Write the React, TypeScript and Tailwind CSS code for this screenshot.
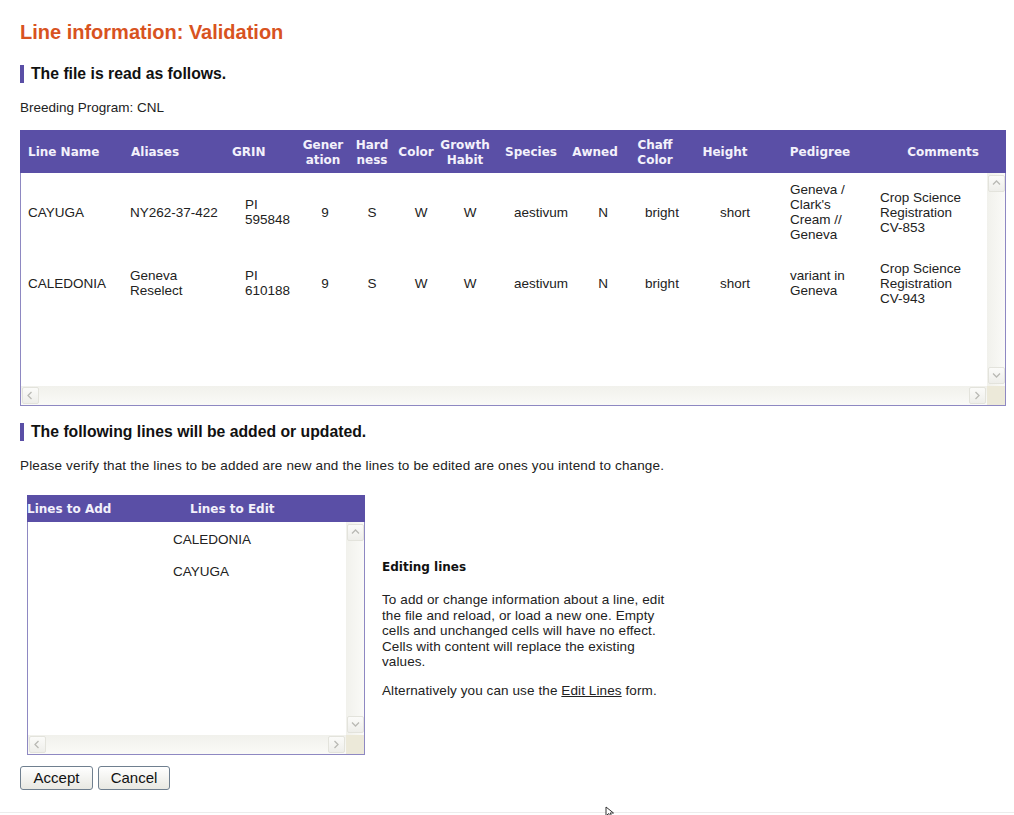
import React from "react";

const PURPLE = "bg-[#5a4fa6]";

function Chevron({ dir }: { dir: "up" | "down" | "left" | "right" }) {
  const pts: Record<string, string> = {
    up: "1,5.5 4.5,2 8,5.5",
    down: "1,2.5 4.5,6 8,2.5",
    left: "5.5,1 2,4.5 5.5,8",
    right: "2.5,1 6,4.5 2.5,8",
  };
  return (
    <svg width="9" height="9" viewBox="0 0 9 9">
      <polyline points={pts[dir]} fill="none" stroke="#b9b9b4" strokeWidth="1.3" />
    </svg>
  );
}

function SBtn({ dir }: { dir: "up" | "down" | "left" | "right" }) {
  return (
    <div className="w-[17px] h-[17px] shrink-0 flex items-center justify-center rounded-[2px] border border-[#e3e3dc] bg-linear-to-b from-[#fbfbf9] to-[#eeeeea]">
      <Chevron dir={dir} />
    </div>
  );
}

function VScroll() {
  return (
    <div className="w-[18px] shrink-0 flex flex-col items-center pt-[2px] pb-[2px] bg-linear-to-r from-[#f1f1ec] to-[#fafaf7]">
      <SBtn dir="up" />
      <div className="flex-1" />
      <SBtn dir="down" />
    </div>
  );
}

function HScroll() {
  return (
    <div className="h-[19px] shrink-0 flex">
      <div className="flex-1 flex items-center pl-[1px] pr-[1px] bg-linear-to-b from-[#f1f1ec] to-[#fafaf7]">
        <SBtn dir="left" />
        <div className="flex-1" />
        <SBtn dir="right" />
      </div>
      <div className="w-[18px] bg-[#ece9d9]" />
    </div>
  );
}

function Heading({ children, className }: { children: React.ReactNode; className?: string }) {
  return (
    <div className={"flex items-center h-[18px] " + (className || "")}>
      <div className={"w-[4px] h-[18px] " + PURPLE} />
      <div className="ml-[7px] font-bold text-[15.75px] leading-[18px] text-[#111]">{children}</div>
    </div>
  );
}

type Row = {
  name: string;
  aliases: React.ReactNode;
  grin: React.ReactNode;
  gen: string;
  hard: string;
  color: string;
  growth: string;
  species: string;
  awned: string;
  chaff: string;
  height: string;
  pedigree: React.ReactNode;
  comments: React.ReactNode;
  h: string;
};

const rows: Row[] = [
  {
    name: "CAYUGA",
    aliases: "NY262-37-422",
    grin: (
      <>
        PI
        <br />
        595848
      </>
    ),
    gen: "9",
    hard: "S",
    color: "W",
    growth: "W",
    species: "aestivum",
    awned: "N",
    chaff: "bright",
    height: "short",
    pedigree: (
      <>
        Geneva /<br />
        Clark&#39;s
        <br />
        Cream //
        <br />
        Geneva
      </>
    ),
    comments: (
      <>
        Crop Science
        <br />
        Registration
        <br />
        CV-853
      </>
    ),
    h: "h-[78px]",
  },
  {
    name: "CALEDONIA",
    aliases: (
      <>
        Geneva
        <br />
        Reselect
      </>
    ),
    grin: (
      <>
        PI
        <br />
        610188
      </>
    ),
    gen: "9",
    hard: "S",
    color: "W",
    growth: "W",
    species: "aestivum",
    awned: "N",
    chaff: "bright",
    height: "short",
    pedigree: (
      <>
        variant in
        <br />
        Geneva
      </>
    ),
    comments: (
      <>
        Crop Science
        <br />
        Registration
        <br />
        CV-943
      </>
    ),
    h: "h-[64px]",
  },
];

export default function App() {
  return (
    <div className="relative w-[1014px] h-[815px] overflow-hidden bg-white font-['Liberation_Sans',Arial,sans-serif] text-[13.5px] leading-[15px] text-[#222]">
      <div className="pl-[20px] pt-[20px]">
        <h1 className="font-bold text-[20px] leading-[24px] text-[#d8531f]">Line information: Validation</h1>

        <Heading className="mt-[21px]">The file is read as follows.</Heading>

        <div className="mt-[17px]">Breeding Program: CNL</div>

        {/* main table */}
        <div className="mt-[15px] w-[986px]">
          <div className={"flex items-center pt-[2px] h-[43px] text-[#f3f1fb] font-['DejaVu_Sans',Verdana,sans-serif] font-bold text-[12px] leading-[15px] " + PURPLE}>
            <div className="w-[103px] pl-[8px]">Line Name</div>
            <div className="w-[101px] pl-[8px]">Aliases</div>
            <div className="w-[72px] pl-[8px]">GRIN</div>
            <div className="w-[54px] text-center">
              Gener
              <br />
              ation
            </div>
            <div className="w-[44px] text-center">
              Hard
              <br />
              ness
            </div>
            <div className="w-[44px] text-center">Color</div>
            <div className="w-[54px] text-center">
              Growth
              <br />
              Habit
            </div>
            <div className="w-[78px] text-center">Species</div>
            <div className="w-[50px] text-center">Awned</div>
            <div className="w-[70px] text-center">
              Chaff
              <br />
              Color
            </div>
            <div className="w-[70px] text-center">Height</div>
            <div className="w-[120px] text-center">Pedigree</div>
            <div className="w-[126px] text-center">Comments</div>
          </div>
          <div className="h-[233px] flex flex-col border border-t-0 border-[#8e88c2]">
            <div className="flex-1 flex min-h-0">
              <div className="flex-1">
                {rows.map((r) => (
                  <div key={r.name} className={"flex items-center " + r.h}>
                    <div className="w-[102px] pl-[7px]">{r.name}</div>
                    <div className="w-[101px] pl-[7px]">{r.aliases}</div>
                    <div className="w-[76px] pl-[21px]">{r.grin}</div>
                    <div className="w-[50px] text-center">{r.gen}</div>
                    <div className="w-[44px] text-center">{r.hard}</div>
                    <div className="w-[54px] text-center">{r.color}</div>
                    <div className="w-[44px] text-center">{r.growth}</div>
                    <div className="w-[98px] text-center">{r.species}</div>
                    <div className="w-[26px] text-center">{r.awned}</div>
                    <div className="w-[92px] text-center">{r.chaff}</div>
                    <div className="w-[54px] text-center">{r.height}</div>
                    <div className="w-[110px] pl-[28px]">{r.pedigree}</div>
                    <div className="w-[112px] pl-[8px]">{r.comments}</div>
                  </div>
                ))}
              </div>
              <VScroll />
            </div>
            <HScroll />
          </div>
        </div>

        <Heading className="mt-[17px]">The following lines will be added or updated.</Heading>

        <div className="mt-[17px] tracking-[0.15px]">
          Please verify that the lines to be added are new and the lines to be edited are ones you intend to change.
        </div>

        <div className="mt-[22px] flex">
          <div className="ml-[7px] w-[338px]">
            <div className={"h-[27px] pt-[2px] flex items-center text-[#f3f1fb] font-['DejaVu_Sans',Verdana,sans-serif] font-bold text-[12px] " + PURPLE}>
              <div className="w-[163px]">Lines to Add</div>
              <div>Lines to Edit</div>
            </div>
            <div className="h-[233px] flex flex-col border border-t-0 border-[#8e88c2]">
              <div className="flex-1 flex min-h-0">
                <div className="flex-1 pl-[145px] pt-[10px]">
                  <div>CALEDONIA</div>
                  <div className="mt-[17px]">CAYUGA</div>
                </div>
                <VScroll />
              </div>
              <HScroll />
            </div>
          </div>

          <div className="ml-[17px] pt-[65px]">
            <div className="font-['DejaVu_Sans',Verdana,sans-serif] font-bold text-[12px] leading-[15px] text-[#111]">Editing lines</div>
            <p className="mt-[17px] leading-[15.5px] tracking-[0.1px]">
              To add or change information about a line, edit
              <br />
              the file and reload, or load a new one. Empty
              <br />
              cells and unchanged cells will have no effect.
              <br />
              Cells with content will replace the existing
              <br />
              values.
            </p>
            <p className="mt-[13px] leading-[15.5px] tracking-[0.1px]">
              Alternatively you can use the <span className="underline">Edit Lines</span> form.
            </p>
          </div>
        </div>

        <div className="mt-[11px] flex gap-[5px]">
          <button className="w-[73px] h-[24px] rounded-[3px] border border-[#6f7f8f] bg-linear-to-b from-[#ffffff] to-[#e8e8e2] text-[15px] leading-[20px] text-[#111]">
            Accept
          </button>
          <button className="w-[72px] h-[24px] rounded-[3px] border border-[#6f7f8f] bg-linear-to-b from-[#ffffff] to-[#e8e8e2] text-[15px] leading-[20px] text-[#111]">
            Cancel
          </button>
        </div>
      </div>

      <div className="mt-[22px] border-t border-[#ececec]" />

      <svg className="absolute left-[605px] top-[806px]" width="10" height="12" viewBox="0 0 10 12">
        <path d="M1 1 L1 10 L3.5 7.5 L5.5 11 L7 10.3 L5 7 L8.5 7 Z" fill="#fff" stroke="#333" strokeWidth="1" />
      </svg>
    </div>
  );
}
